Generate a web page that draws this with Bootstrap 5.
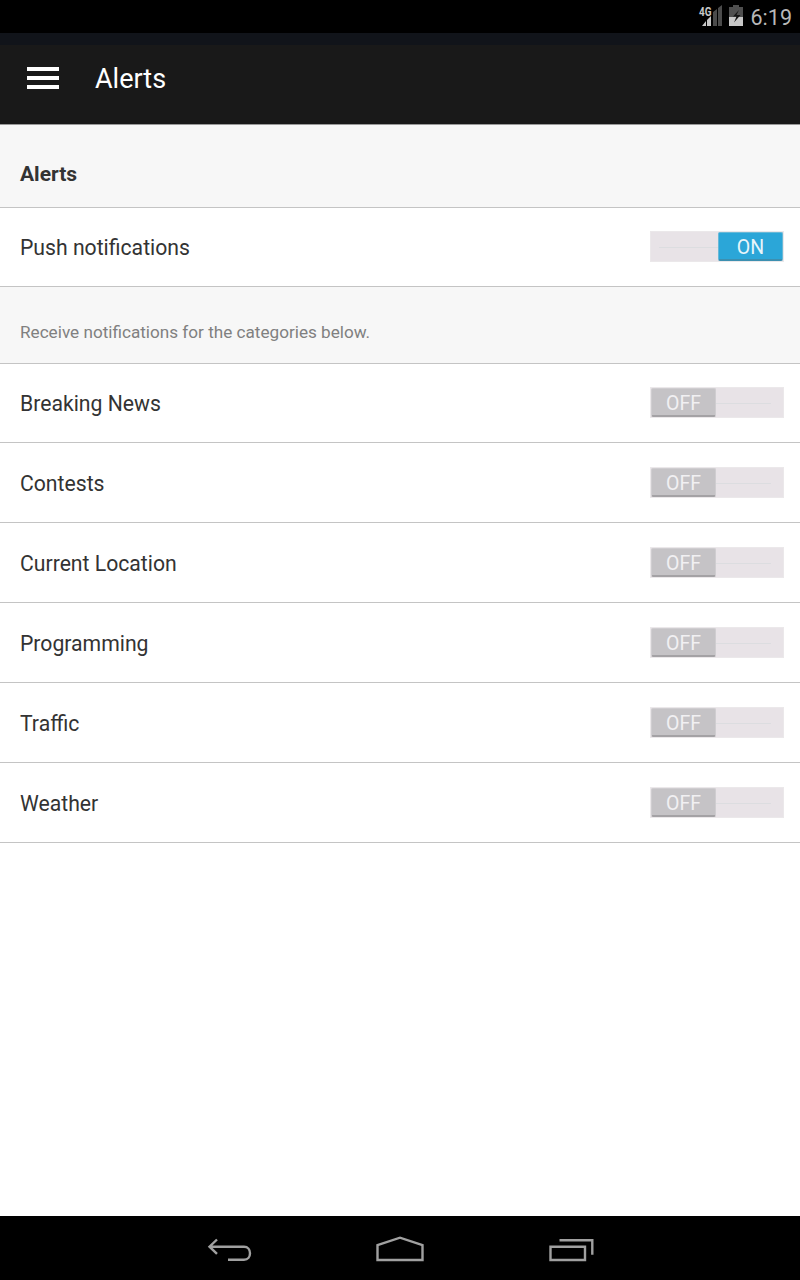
<!DOCTYPE html>
<html lang="en">
<head>
<meta charset="utf-8">
<meta name="viewport" content="width=device-width, initial-scale=1">
<title>Alerts</title>
<link rel="stylesheet" href="https://cdn.jsdelivr.net/npm/bootstrap@5.3.0/dist/css/bootstrap.min.css">
<style>
body{font-family:Roboto,sans-serif;width:800px;height:1280px;overflow:hidden;color:#333;line-height:1}
.statusbar{height:33px;padding:2px 8px 0 0}
.statusbar svg{margin-top:-3px}
.clock{font-size:21.5px;color:#b8b8b8;margin-left:7px}
.appbar{height:92px;background:#191919;border-top:12px solid #11141a;border-bottom:1px solid #999;padding:0 27px 13px}
.appbar h1{font-size:27px;font-weight:400;color:#fff;margin:2px 0 0 36px}
.settings>.list-group-item{border:0;border-bottom:1px solid #c4c4c4;height:80px;padding:2px 16px 0 20px;background:#fff;color:#333;font-size:21.2px;line-height:21px}
.settings>.list-group-item:last-child{border-bottom-width:1px}
.settings>.head{height:83px;padding-top:16px;background:#f7f7f7;font-size:21px}
.settings>.note{height:77px;padding-top:14px;background:#f7f7f7;color:#808080;font-size:17.15px;line-height:17px}
.settings>.short{height:79px;padding-top:1px}
.toggle{width:134px;height:31px;background:linear-gradient(#dcdde0,#dcdde0) 8px 15px/112px 1px no-repeat #e8e3e7;border:1px solid #ebe8ea;align-self:flex-start;margin-top:22px}
.knob{width:65px;height:29px;border-radius:2px;font-size:19.5px;line-height:20px;color:#f1f0f2;background:#c5c3c6;border:1px solid #cfcdd0;border-bottom:2px solid #a4a2a5;padding-top:4px}
.knob.on{background:#2ba6d8;border-color:#68b9d8;border-bottom-color:#3c8fb0;color:#e8f5fa;margin-left:auto}
.navkeys{height:64px}
.navkeys svg{margin-top:4px}
</style>
<script src="https://cdn.jsdelivr.net/npm/bootstrap@5.3.0/dist/js/bootstrap.bundle.min.js"></script>
</head>
<body class="d-flex flex-column bg-white">
<div class="statusbar bg-black d-flex align-items-center justify-content-end flex-shrink-0">
  <svg width="46" height="28" viewBox="698 2 46 28">
    <path d="M718 8l4-3v21h-4zM713 12l4-3v17h-4z" fill="#4b4b4b"/>
    <path d="M707 20l4-4v10h-4zM702 26l4-5v5z" fill="#c8c8c8"/>
    <text x="699" y="15.500" font-size="12.500" font-weight="700" fill="#c8c8c8" textLength="12.500" lengthAdjust="spacingAndGlyphs">4G</text>
    <path d="M733 5h6v2h4v11h-14V7h4z" fill="#4f4f4f"/>
    <path d="M729 17h14v9h-14z" fill="#c8c8c8"/>
    <path d="M739 10l-6 6.500h3.500l-2.500 6 6.500-7.500h-4z" fill="#151515"/>
  </svg>
  <span class="clock">6:19</span>
</div>
<header class="appbar d-flex align-items-center flex-shrink-0">
  <svg width="32" height="22" fill="#fff"><path d="M0 0h32v4H0zM0 9h32v4H0zM0 18h32v4H0z"/></svg>
  <h1>Alerts</h1>
</header>
<main class="flex-grow-1">
  <ul class="settings list-group list-group-flush">
    <li class="list-group-item head d-flex align-items-center fw-bold">Alerts</li>
    <li class="list-group-item short d-flex align-items-center justify-content-between">Push notifications<span class="toggle"><span class="knob on d-flex align-items-center justify-content-center">ON</span></span></li>
    <li class="list-group-item note d-flex align-items-center">Receive notifications for the categories below.</li>
    <li class="list-group-item short d-flex align-items-center justify-content-between">Breaking News<span class="toggle"><span class="knob d-flex align-items-center justify-content-center">OFF</span></span></li>
    <li class="list-group-item d-flex align-items-center justify-content-between">Contests<span class="toggle"><span class="knob d-flex align-items-center justify-content-center">OFF</span></span></li>
    <li class="list-group-item d-flex align-items-center justify-content-between">Current Location<span class="toggle"><span class="knob d-flex align-items-center justify-content-center">OFF</span></span></li>
    <li class="list-group-item d-flex align-items-center justify-content-between">Programming<span class="toggle"><span class="knob d-flex align-items-center justify-content-center">OFF</span></span></li>
    <li class="list-group-item d-flex align-items-center justify-content-between">Traffic<span class="toggle"><span class="knob d-flex align-items-center justify-content-center">OFF</span></span></li>
    <li class="list-group-item d-flex align-items-center justify-content-between">Weather<span class="toggle"><span class="knob d-flex align-items-center justify-content-center">OFF</span></span></li>
  </ul>
</main>
<nav class="navkeys bg-black d-flex justify-content-center flex-shrink-0">
  <svg width="170" height="60" viewBox="145 1220 170 60" fill="none" stroke="#a0a0a0" stroke-width="2.4"><path d="M217 1239.500l-7.500 7.200 7.500 7.200M210 1246.700h34c8 0 8 13 0 13h-16"/></svg>
  <svg width="170" height="60" viewBox="315 1220 170 60" fill="none" stroke="#a0a0a0" stroke-width="2.4"><path d="M377.500 1260v-14.800l22.500-7.500 22.500 7.500V1260z"/></svg>
  <svg width="170" height="60" viewBox="485 1220 170 60" fill="none" stroke="#a0a0a0" stroke-width="2.4"><path d="M550.500 1246.700h34.500v13.300h-34.500zM559.500 1240.200h32.800v14.500"/></svg>
</nav>
</body>
</html>
